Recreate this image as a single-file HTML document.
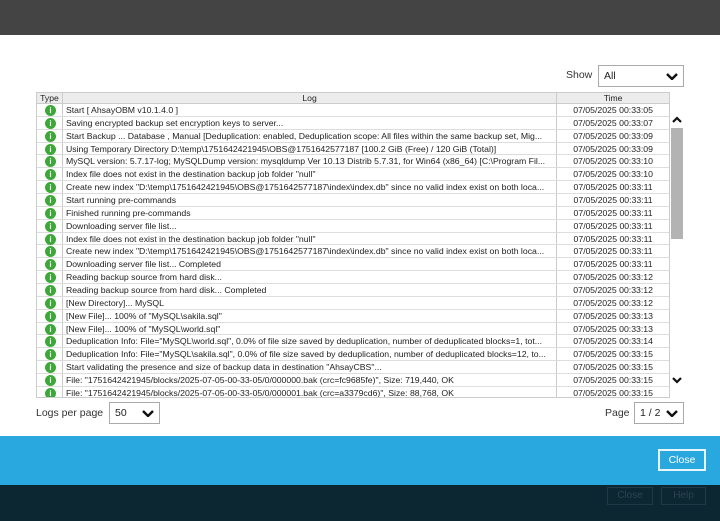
<!DOCTYPE html>
<html><head><meta charset="utf-8"><style>
*{margin:0;padding:0;box-sizing:border-box}
body{width:720px;height:521px;overflow:hidden;background:#fff;font-family:"Liberation Sans",sans-serif;font-size:8.7px;color:#222;position:relative}
.top{position:absolute;left:0;top:0;width:720px;height:35px;background:#444}
.blue{position:absolute;left:0;top:436px;width:720px;height:49px;background:#29a8df}
.dark{position:absolute;left:0;top:485px;width:720px;height:36px;background:#0c2632}
.btn{position:absolute;border:1px solid #1f3a47;color:#2c4452;font-size:10px;text-align:center;line-height:16px;height:18px}
.close{position:absolute;left:658px;top:449px;width:48px;height:22px;border:2px solid #e6f6fc;color:#fff;font-size:10.5px;text-align:center;line-height:18px}
.sel{position:absolute;border:1px solid #aaa;background:#fff;font-size:10.5px;line-height:20px;padding-left:5px;height:22px}
.chev{position:absolute;right:5px;top:7px;width:12px;height:7px}
.lbl{position:absolute;font-size:10.5px;color:#333}
.tbl{position:absolute;left:36px;top:92px;width:634px;height:306px;border:1px solid #ccc;overflow:hidden}
.hd{height:11px;background:#ececec;border-bottom:1px solid #ccc;display:flex;font-size:8.6px;line-height:11px}
.hd div{border-right:1px solid #ccc;text-align:center}
.row{height:12.86px;border-bottom:1px solid #ddd;display:flex;line-height:12px;white-space:nowrap}
.c1{width:26px;border-right:1px solid #ccc;position:relative}
.c2{width:495px;border-right:1px solid #ccc;padding-left:3px;overflow:hidden}
.c3{width:112px;text-align:center}
.ic{position:absolute;left:8px;top:1px;width:11px;height:11px;border-radius:50%;background:#3da839;color:#fff;font-size:8px;font-weight:bold;text-align:center;line-height:11px}
.sb{position:absolute;left:670px;top:103px;width:14px;height:295px;background:#fff}
.thumb{position:absolute;left:1px;top:25px;width:12px;height:111px;background:#b3b3b3}
</style></head><body>
<div class="top"></div>
<div class="lbl" style="left:566px;top:69px">Show</div>
<div class="sel" style="left:598px;top:65px;width:86px">All<svg class="chev" viewBox="0 0 12 7"><path d="M1 1l5 5 5-5" stroke="#111" stroke-width="2.4" fill="none"/></svg></div>
<div class="tbl">
<div class="hd"><div style="width:26px">Type</div><div style="width:495px">Log</div><div style="width:112px;border:none">Time</div></div>
<div class="row"><div class="c1"><span class="ic">i</span></div><div class="c2">Start [ AhsayOBM v10.1.4.0 ]</div><div class="c3">07/05/2025 00:33:05</div></div>
<div class="row"><div class="c1"><span class="ic">i</span></div><div class="c2">Saving encrypted backup set encryption keys to server...</div><div class="c3">07/05/2025 00:33:07</div></div>
<div class="row"><div class="c1"><span class="ic">i</span></div><div class="c2">Start Backup ... Database , Manual [Deduplication: enabled, Deduplication scope: All files within the same backup set, Mig...</div><div class="c3">07/05/2025 00:33:09</div></div>
<div class="row"><div class="c1"><span class="ic">i</span></div><div class="c2">Using Temporary Directory D:\temp\1751642421945\OBS@1751642577187 [100.2 GiB (Free) / 120 GiB (Total)]</div><div class="c3">07/05/2025 00:33:09</div></div>
<div class="row"><div class="c1"><span class="ic">i</span></div><div class="c2">MySQL version: 5.7.17-log; MySQLDump version: mysqldump  Ver 10.13 Distrib 5.7.31, for Win64 (x86_64) [C:\Program Fil...</div><div class="c3">07/05/2025 00:33:10</div></div>
<div class="row"><div class="c1"><span class="ic">i</span></div><div class="c2">Index file does not exist in the destination backup job folder "null"</div><div class="c3">07/05/2025 00:33:10</div></div>
<div class="row"><div class="c1"><span class="ic">i</span></div><div class="c2">Create new index "D:\temp\1751642421945\OBS@1751642577187\index\index.db" since no valid index exist on both loca...</div><div class="c3">07/05/2025 00:33:11</div></div>
<div class="row"><div class="c1"><span class="ic">i</span></div><div class="c2">Start running pre-commands</div><div class="c3">07/05/2025 00:33:11</div></div>
<div class="row"><div class="c1"><span class="ic">i</span></div><div class="c2">Finished running pre-commands</div><div class="c3">07/05/2025 00:33:11</div></div>
<div class="row"><div class="c1"><span class="ic">i</span></div><div class="c2">Downloading server file list...</div><div class="c3">07/05/2025 00:33:11</div></div>
<div class="row"><div class="c1"><span class="ic">i</span></div><div class="c2">Index file does not exist in the destination backup job folder "null"</div><div class="c3">07/05/2025 00:33:11</div></div>
<div class="row"><div class="c1"><span class="ic">i</span></div><div class="c2">Create new index "D:\temp\1751642421945\OBS@1751642577187\index\index.db" since no valid index exist on both loca...</div><div class="c3">07/05/2025 00:33:11</div></div>
<div class="row"><div class="c1"><span class="ic">i</span></div><div class="c2">Downloading server file list... Completed</div><div class="c3">07/05/2025 00:33:11</div></div>
<div class="row"><div class="c1"><span class="ic">i</span></div><div class="c2">Reading backup source from hard disk...</div><div class="c3">07/05/2025 00:33:12</div></div>
<div class="row"><div class="c1"><span class="ic">i</span></div><div class="c2">Reading backup source from hard disk... Completed</div><div class="c3">07/05/2025 00:33:12</div></div>
<div class="row"><div class="c1"><span class="ic">i</span></div><div class="c2">[New Directory]... MySQL</div><div class="c3">07/05/2025 00:33:12</div></div>
<div class="row"><div class="c1"><span class="ic">i</span></div><div class="c2">[New File]... 100% of "MySQL\sakila.sql"</div><div class="c3">07/05/2025 00:33:13</div></div>
<div class="row"><div class="c1"><span class="ic">i</span></div><div class="c2">[New File]... 100% of "MySQL\world.sql"</div><div class="c3">07/05/2025 00:33:13</div></div>
<div class="row"><div class="c1"><span class="ic">i</span></div><div class="c2">Deduplication Info: File="MySQL\world.sql", 0.0% of file size saved by deduplication, number of deduplicated blocks=1, tot...</div><div class="c3">07/05/2025 00:33:14</div></div>
<div class="row"><div class="c1"><span class="ic">i</span></div><div class="c2">Deduplication Info: File="MySQL\sakila.sql", 0.0% of file size saved by deduplication, number of deduplicated blocks=12, to...</div><div class="c3">07/05/2025 00:33:15</div></div>
<div class="row"><div class="c1"><span class="ic">i</span></div><div class="c2">Start validating the presence and size of backup data in destination "AhsayCBS"...</div><div class="c3">07/05/2025 00:33:15</div></div>
<div class="row"><div class="c1"><span class="ic">i</span></div><div class="c2">File: "1751642421945/blocks/2025-07-05-00-33-05/0/000000.bak (crc=fc9685fe)", Size: 719,440, OK</div><div class="c3">07/05/2025 00:33:15</div></div>
<div class="row"><div class="c1"><span class="ic">i</span></div><div class="c2">File: "1751642421945/blocks/2025-07-05-00-33-05/0/000001.bak (crc=a3379cd6)", Size: 88,768, OK</div><div class="c3">07/05/2025 00:33:15</div></div>
</div>
<div class="sb"><svg style="position:absolute;left:2px;top:13px" width="10" height="7" viewBox="0 0 10 7"><path d="M1 6l4-4 4 4" stroke="#111" stroke-width="2.2" fill="none"/></svg><div class="thumb"></div><svg style="position:absolute;left:2px;top:274px" width="10" height="7" viewBox="0 0 10 7"><path d="M1 1l4 4 4-4" stroke="#111" stroke-width="2.2" fill="none"/></svg></div>
<div class="lbl" style="left:36px;top:407px">Logs per page</div>
<div class="sel" style="left:109px;top:402px;width:51px">50<svg class="chev" viewBox="0 0 12 7"><path d="M1 1l5 5 5-5" stroke="#111" stroke-width="2.4" fill="none"/></svg></div>
<div class="lbl" style="left:605px;top:407px">Page</div>
<div class="sel" style="left:634px;top:402px;width:50px">1 / 2<svg class="chev" viewBox="0 0 12 7"><path d="M1 1l5 5 5-5" stroke="#111" stroke-width="2.4" fill="none"/></svg></div>
<div class="blue"></div>
<div class="close">Close</div>
<div class="dark"></div>
<div class="btn" style="left:607px;top:487px;width:46px">Close</div>
<div class="btn" style="left:661px;top:487px;width:45px">Help</div>
</body></html>
